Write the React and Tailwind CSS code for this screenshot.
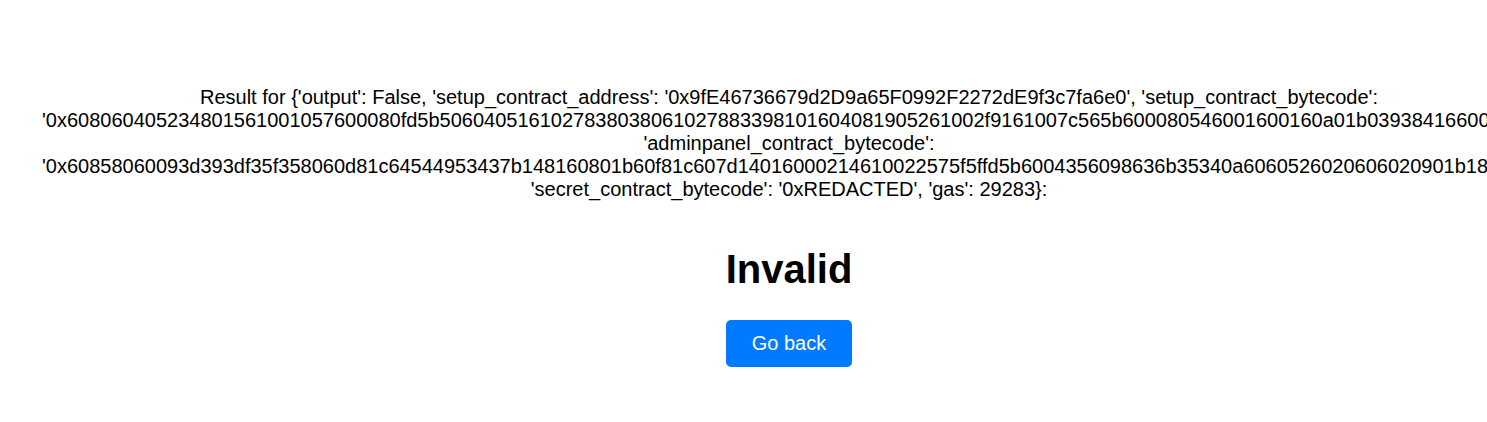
import React from 'react';

const setupBytecode =
  '0x608060405234801561001057600080fd5b5060405161027838038061027883398101604081905261002f9161007c565b600080546001600160a01b03938416600160a01b031991821617909155600180549290931691161790556100af565b80516001600160a01b038116811461007757600080fd5b919050565b6000806040838503121561008f57600080fd5b61009883610060565b91506100a660208401610060565b90509250929050565b6101ba806100be6000396000f3fe';

const adminpanelBytecode =
  '0x60858060093d393df35f358060d81c64544953437b148160801b60f81c607d14016000214610022575f5ffd5b6004356098636b35340a6060526020606020901b186024353d5260203d6000f35b5f5ffd5b60243560405260206040f3fea264697066735822122037';

const App = () => {
  const result = `Result for {'output': False, 'setup_contract_address': '0x9fE46736679d2D9a65F0992F2272dE9f3c7fa6e0', 'setup_contract_bytecode': '${setupBytecode}', 'adminpanel_contract_bytecode': '${adminpanelBytecode}', 'secret_contract_bytecode': '0xREDACTED', 'gas': 29283}:`;

  return (
    <div className="w-[1487px] h-[422px] overflow-hidden bg-white text-black font-['Liberation_Sans',Arial,sans-serif]">
      <div className="ml-[42px] w-[1494px] pt-[86px] flex flex-col items-center text-center">
        <p className="w-full text-[20px] leading-[23px]">{result}</p>

        <h1 className="mt-[45px] text-[40px] leading-[46px] font-bold">Invalid</h1>

        <button
          type="button"
          className="mt-[28px] px-[26px] py-3 bg-[#007bff] text-white text-[20px] leading-[23px] rounded-[5px]"
        >
          Go back
        </button>
      </div>
    </div>
  );
};

export default App;
